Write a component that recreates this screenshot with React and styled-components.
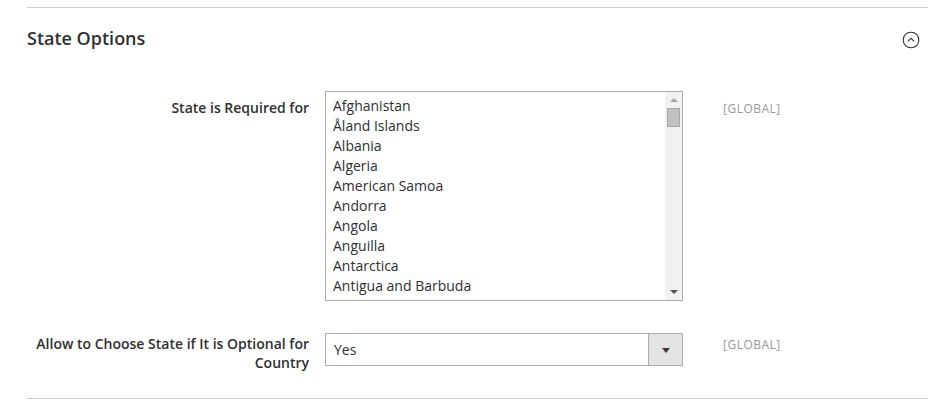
import React from "react";
import styled, { createGlobalStyle } from "styled-components";

const countries = [
  "Afghanistan",
  "Åland Islands",
  "Albania",
  "Algeria",
  "American Samoa",
  "Andorra",
  "Angola",
  "Anguilla",
  "Antarctica",
  "Antigua and Barbuda",
];

function App() {
  return (
    <>
      <GlobalStyle />
      <Section>
        <Header>
          <Title>State Options</Title>
          <Toggle>
            <svg width="18" height="18" viewBox="0 0 18 18">
              <circle cx="9" cy="9" r="7.8" fill="none" stroke="#303030" strokeWidth="1.1" />
              <path d="M5.8 10.4 L9 7.3 L12.2 10.4" fill="none" stroke="#303030" strokeWidth="1.1" />
            </svg>
          </Toggle>
        </Header>
        <Fieldset>
          <Row>
            <Label>State is Required for</Label>
            <Control>
              <MultiSelect>
                <Options>
                  {countries.map((c) => (
                    <Option key={c}>{c}</Option>
                  ))}
                </Options>
                <Scrollbar>
                  <ArrowUp />
                  <Track>
                    <Thumb />
                  </Track>
                  <ArrowDown />
                </Scrollbar>
              </MultiSelect>
            </Control>
            <Scope>[GLOBAL]</Scope>
          </Row>
          <Row $top={32}>
            <Label $pad={1}>
              Allow to Choose State if It is Optional for Country
            </Label>
            <Control>
              <Select>
                <SelectValue>Yes</SelectValue>
                <SelectButton>
                  <Caret />
                </SelectButton>
              </Select>
            </Control>
            <Scope $pad={4}>[GLOBAL]</Scope>
          </Row>
        </Fieldset>
      </Section>
    </>
  );
}

export default App;

const GlobalStyle = createGlobalStyle`
  body {
    margin: 0;
    background: #fff;
    font-family: "Open Sans", "Noto Sans", sans-serif;
    color: #303030;
  }
`;

const Section = styled.div`
  margin: 7px 0 0 27px;
  border-top: 1px solid #cccccc;
  border-bottom: 1px solid #cccccc;
  padding-bottom: 26px;
`;

const Header = styled.div`
  display: flex;
  align-items: center;
  justify-content: space-between;
  height: 62px;
  padding-right: 8px;
`;

const Title = styled.h2`
  margin: -2px 0 0;
  font-size: 18px;
  font-weight: 600;
  color: #303030;
`;

const Toggle = styled.span`
  display: flex;
  margin-top: 1px;
`;

const Fieldset = styled.div`
  padding-top: 21px;
`;

const Row = styled.div`
  display: flex;
  align-items: flex-start;
  margin-top: ${(p) => p.$top || 0}px;
`;

const Label = styled.div`
  width: 282px;
  padding: ${(p) => (p.$pad != null ? p.$pad : 7)}px 16px 0 0;
  text-align: right;
  font-size: 14px;
  font-weight: 600;
  line-height: 19px;
  color: #303030;
`;

const Control = styled.div`
  width: 358px;
`;

const Scope = styled.div`
  padding: ${(p) => (p.$pad != null ? p.$pad : 10)}px 0 0 40px;
  font-size: 12px;
  line-height: 16px;
  color: #999999;
  letter-spacing: 0.5px;
`;

const MultiSelect = styled.div`
  display: flex;
  height: 210px;
  box-sizing: border-box;
  border: 1px solid #adadad;
  overflow: hidden;
`;

const Options = styled.div`
  flex: 1;
  padding: 4px 7px;
  overflow: hidden;
`;

const Option = styled.div`
  font-size: 14px;
  line-height: 20px;
  color: #303030;
  white-space: nowrap;
`;

const Scrollbar = styled.div`
  width: 17px;
  display: flex;
  flex-direction: column;
  background: #f1f1f1;
`;

const ArrowUp = styled.div`
  height: 16px;
  display: flex;
  align-items: center;
  justify-content: center;
  &:before {
    content: "";
    border-left: 4px solid transparent;
    border-right: 4px solid transparent;
    border-bottom: 4px solid #a3a3a3;
  }
`;

const ArrowDown = styled(ArrowUp)`
  &:before {
    border-bottom: 0;
    border-top: 4px solid #505050;
  }
`;

const Track = styled.div`
  flex: 1;
  padding: 0 2px;
`;

const Thumb = styled.div`
  height: 19px;
  background: #c1c1c1;
  border: 1px solid #a8a8a8;
  box-sizing: border-box;
`;

const Select = styled.div`
  display: flex;
  height: 33px;
  box-sizing: border-box;
  border: 1px solid #adadad;
`;

const SelectValue = styled.div`
  flex: 1;
  padding: 0 8px;
  font-size: 14px;
  line-height: 31px;
  color: #303030;
`;

const SelectButton = styled.div`
  width: 33px;
  background: #e3e3e3;
  border-left: 1px solid #adadad;
  display: flex;
  align-items: center;
  justify-content: center;
`;

const Caret = styled.span`
  border-left: 4px solid transparent;
  border-right: 4px solid transparent;
  border-top: 5px solid #41362f;
  margin-top: 1px;
`;
